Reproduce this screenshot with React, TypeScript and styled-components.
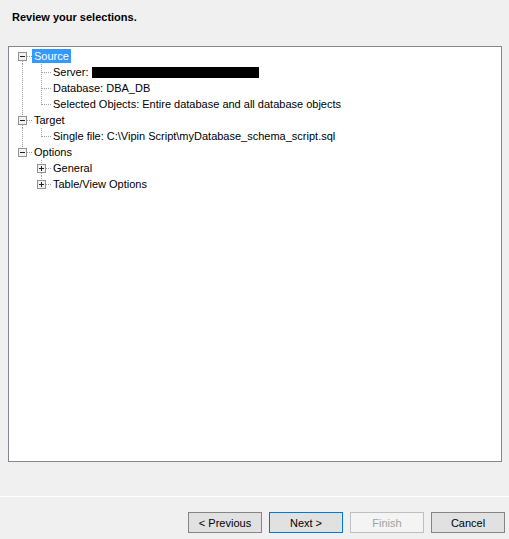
import { createGlobalStyle } from "styled-components";
import styled from "styled-components";

type Line = "none" | "full" | "top" | "bottom";

interface Cell {
  v: Line;
  h?: boolean;
  box?: "plus" | "minus";
}

interface Node {
  cells: Cell[];
  label: string;
  selected?: boolean;
  redacted?: boolean;
}

const nodes: Node[] = [
  { cells: [{ v: "bottom", h: true, box: "minus" }], label: "Source", selected: true },
  { cells: [{ v: "full" }, { v: "full", h: true }], label: "Server:", redacted: true },
  { cells: [{ v: "full" }, { v: "full", h: true }], label: "Database: DBA_DB" },
  {
    cells: [{ v: "full" }, { v: "top", h: true }],
    label: "Selected Objects: Entire database and all database objects"
  },
  { cells: [{ v: "full", h: true, box: "minus" }], label: "Target" },
  {
    cells: [{ v: "full" }, { v: "top", h: true }],
    label: "Single file: C:\\Vipin Script\\myDatabase_schema_script.sql"
  },
  { cells: [{ v: "top", h: true, box: "minus" }], label: "Options" },
  { cells: [{ v: "none" }, { v: "full", h: true, box: "plus" }], label: "General" },
  { cells: [{ v: "none" }, { v: "top", h: true, box: "plus" }], label: "Table/View Options" }
];

const GlobalStyle = createGlobalStyle`
  html, body {
    margin: 0;
    padding: 0;
    background: #f0f0f0;
  }
  body {
    font-family: "Liberation Sans", Arial, sans-serif;
    font-size: 11px;
    color: #000;
  }
`;

const DOT = "#a0a0a0";

// one 19x16 gutter cell of the tree: dotted connectors and the +/- box
const Connector = ({ cell }: { cell: Cell }) => {
  const cx = 9.5;
  const cy = 8.5;
  const hasBox = !!cell.box;
  const top = hasBox ? 4 : cy;
  return (
    <ConnectorSvg width={19} height={16} viewBox="0 0 19 16">
      {(cell.v === "full" || cell.v === "top") && (
        <line
          x1={cx}
          y1={0}
          x2={cx}
          y2={cell.v === "full" && !hasBox ? 16 : top}
          stroke={DOT}
          strokeDasharray="1 1"
        />
      )}
      {(cell.v === "full" || cell.v === "bottom") && hasBox && (
        <line x1={cx} y1={13} x2={cx} y2={16} stroke={DOT} strokeDasharray="1 1" />
      )}
      {cell.v === "bottom" && !hasBox && (
        <line x1={cx} y1={cy} x2={cx} y2={16} stroke={DOT} strokeDasharray="1 1" />
      )}
      {cell.h && (
        <line
          x1={hasBox ? 14 : 10}
          y1={cy}
          x2={19}
          y2={cy}
          stroke={DOT}
          strokeDasharray="1 1"
        />
      )}
      {hasBox && (
        <>
          <rect x={5.5} y={4.5} width={8} height={8} fill="#f2f2f2" stroke="#919191" />
          <line x1={7} y1={cy} x2={12} y2={cy} stroke="#222" />
          {cell.box === "plus" && <line x1={cx} y1={6} x2={cx} y2={11} stroke="#222" />}
        </>
      )}
    </ConnectorSvg>
  );
};

const App = () => {
  return (
    <Wizard>
      <GlobalStyle />
      <Header>Review your selections.</Header>
      <TreeBox>
        {nodes.map((n) => (
          <Row key={n.label}>
            {n.cells.map((c, i) => (
              <Connector key={i} cell={c} />
            ))}
            <Label $selected={n.selected}>
              {n.label}
              {n.redacted && <Redacted />}
            </Label>
          </Row>
        ))}
      </TreeBox>
      <Footer>
        <Button>&lt; Previous</Button>
        <Button $primary>Next &gt;</Button>
        <Button disabled>Finish</Button>
        <Button>Cancel</Button>
      </Footer>
    </Wizard>
  );
};

const Wizard = styled.div`
  width: 509px;
  height: 539px;
  display: flex;
  flex-direction: column;
  background: #f0f0f0;
  overflow: hidden;
`;

const Header = styled.div`
  height: 35px;
  padding: 11px 0 0 12px;
  font-weight: bold;
  font-size: 11px;
  line-height: 13px;
`;

const TreeBox = styled.div`
  height: 399px;
  margin: 0 7px 0 8px;
  padding: 1px 0 14px 4px;
  background: #fff;
  border: 1px solid #828790;
  display: flex;
  flex-direction: column;
`;

const Row = styled.div`
  height: 16px;
  display: flex;
  align-items: flex-start;
  white-space: nowrap;
`;

const ConnectorSvg = styled.svg`
  display: block;
  flex: none;
  shape-rendering: crispEdges;
`;

const Label = styled.span<{ $selected?: boolean }>`
  display: inline-flex;
  align-items: center;
  height: 14px;
  margin-top: 1px;
  padding: 0 2px;
  line-height: 14px;
  background: ${({ $selected }) => ($selected ? "#3399ff" : "transparent")};
  color: ${({ $selected }) => ($selected ? "#fff" : "#000")};
`;

const Redacted = styled.span`
  display: inline-block;
  width: 167px;
  height: 11px;
  margin-left: 4px;
  background: #000;
`;

const Footer = styled.div`
  margin-top: 34px;
  border-top: 1px solid #fff;
  padding: 15px 4px 0 0;
  display: flex;
  justify-content: flex-end;
  gap: 7px;
`;

const Button = styled.button<{ $primary?: boolean }>`
  flex: none;
  width: 74px;
  height: 21px;
  padding: 0;
  font-family: "Liberation Sans", Arial, sans-serif;
  font-size: 11px;
  color: #000;
  background: #e1e1e1;
  border: 1px solid ${({ $primary }) => ($primary ? "#0078d7" : "#858585")};
  border-radius: 0;
  &:disabled {
    color: #a0a0a0;
    background: #f4f4f4;
    border-color: #bfbfbf;
  }
`;

export default App;
